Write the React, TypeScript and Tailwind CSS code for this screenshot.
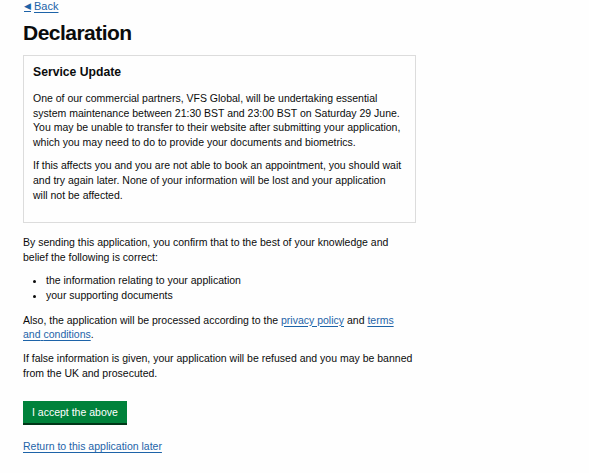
import React from 'react';

const linkCls = 'text-[#1d63a8] underline underline-offset-2';

export default function App() {
  return (
    <div className="min-h-screen w-full bg-[#fefefe] text-[#0b0c0c] font-['Liberation_Sans',Arial,sans-serif]">
      <div className="pl-[23px] w-[416px]">
        {/* back link */}
        <a href="#" className={`flex items-center gap-[3px] pl-[1px] text-[11px] leading-[12px] ${linkCls}`}>
          <span className="text-[9px] inline-block">&#9664;</span>
          <span>Back</span>
        </a>

        <h1 className="mt-[9px] text-[21px] leading-[24px] font-bold tracking-tight">Declaration</h1>

        {/* service update panel */}
        <div className="mt-[10px] border border-[#dcdcdc] px-[9px] pt-[8px] pb-[20px]">
          <h2 className="text-[12.2px] leading-[16px] font-bold">Service Update</h2>
          <p className="mt-[11px] text-[10.5px] leading-[14.6px]">
            One of our commercial partners, VFS Global, will be undertaking essential system maintenance
            between 21:30 BST and 23:00 BST on Saturday 29 June. You may be unable to transfer to their
            website after submitting your application, which you may need to do to provide your documents
            and biometrics.
          </p>
          <p className="mt-[9px] text-[10.5px] leading-[14.6px]">
            If this affects you and you are not able to book an appointment, you should wait and try again
            later. None of your information will be lost and your application will{'\u00a0'}not be affected.
          </p>
        </div>

        <div className="text-[10.5px] leading-[14.6px]">
          <p className="mt-[12px]">
            By sending this application, you confirm that to the best of your knowledge and belief the
            following is correct:
          </p>
          <ul className="mt-[9px] pl-[23px] list-disc">
            <li>the information relating to your application</li>
            <li>your supporting documents</li>
          </ul>
          <p className="mt-[10px]">
            Also, the application will be processed according to the{' '}
            <a href="#" className={linkCls}>privacy policy</a> and{' '}
            <a href="#" className={linkCls}>terms and{'\u00a0'}conditions</a>.
          </p>
          <p className="mt-[9.5px]">
            If false information is given, your application will be refused and you may be banned from the
            UK and prosecuted.
          </p>
        </div>

        <button className="mt-[21px] h-[22px] px-[9px] bg-[#00823b] text-white text-[10.5px] shadow-[0_2px_0_#003618]">
          I accept the above
        </button>

        <div className="mt-[10px]">
          <a href="#" className={`text-[10.5px] leading-[14px] ${linkCls}`}>Return to this application later</a>
        </div>
      </div>
    </div>
  );
}
